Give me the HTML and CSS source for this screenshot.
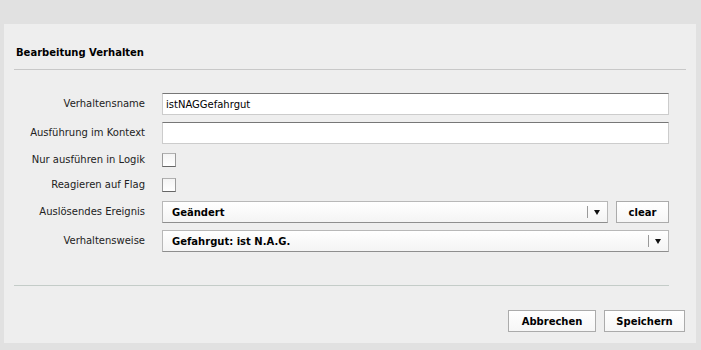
FILE: index.html
```html
<!DOCTYPE html>
<html lang="de">
<head>
  <title>Bearbeitung Verhalten</title>
  <meta charset="utf-8">
  <link rel="stylesheet" href="styles.css">
</head>
<body>
  <div class="panel">
    <h2 class="panel-title">Bearbeitung Verhalten</h2>
    <form class="form">
      <label class="form-label" for="name">Verhaltensname</label>
      <input class="text-input" type="text" id="name" value="istNAGGefahrgut">

      <label class="form-label" for="context">Ausführung im Kontext</label>
      <input class="text-input" type="text" id="context">

      <label class="form-label" for="logic">Nur ausführen in Logik</label>
      <div class="field"><span class="checkbox" id="logic"></span></div>

      <label class="form-label" for="flag">Reagieren auf Flag</label>
      <div class="field"><span class="checkbox" id="flag"></span></div>

      <label class="form-label">Auslösendes Ereignis</label>
      <div class="field field-inline">
        <div class="select">
          <span class="select-value">Geändert</span>
          <span class="select-arrow"></span>
        </div>
        <button type="button" class="button button-small">clear</button>
      </div>

      <label class="form-label">Verhaltensweise</label>
      <div class="select">
        <span class="select-value">Gefahrgut: ist N.A.G.</span>
        <span class="select-arrow"></span>
      </div>
    </form>
    <div class="actions">
      <button type="button" class="button button-cancel">Abbrechen</button>
      <button type="button" class="button button-save">Speichern</button>
    </div>
  </div>
</body>
</html>
```

FILE: styles.css
```css
*, *::before, *::after {
  margin: 0;
  padding: 0;
  box-sizing: border-box;
}

body {
  padding: 24px 5px 6px 4px;
  background-color: #E1E1E1;
  color: #222222;
  font-family: "DejaVu Sans", Verdana, sans-serif;
  font-size: 10px;
}

.panel {
  padding: 22px 10px 11px;
  background-color: #EEEEEE;
}

.panel-title {
  padding: 0 2px 9px;
  border-bottom: 1px solid #C8C8C8;
  color: #000000;
  font-size: 10px;
  font-weight: bold;
  line-height: 14px;
}

.form {
  display: grid;
  grid-template-columns: 131px 1fr;
  grid-template-rows: 22px 22px 18px 18px 22px 22px;
  column-gap: 17px;
  row-gap: 7px;
  margin: 23px 17px 0 0;
  padding-bottom: 33px;
  border-bottom: 1px solid #C4CCC8;
}

.form-label {
  align-self: center;
  text-align: right;
  line-height: 14px;
}

.text-input {
  height: 22px;
  padding: 0 3px;
  border: 1px solid #CCCCCC;
  border-top-color: #777777;
  background-color: #FFFFFF;
  color: #000000;
  font-family: inherit;
  font-size: 10px;
  outline: none;
}

.field {
  display: flex;
  align-items: center;
}

.field-inline {
  gap: 8px;
}

.checkbox {
  width: 14px;
  height: 14px;
  border: 1px solid #9A9A9A;
  border-bottom-color: #666666;
  border-top-color: #B0B0B0;
  background: linear-gradient(#F4F4F4, #FFFFFF);
}

.select {
  flex: 1;
  display: flex;
  align-items: center;
  height: 22px;
  border: 1px solid #B8B8B8;
  border-bottom-color: #8E8E8E;
  background: linear-gradient(#FFFFFF, #F4F4F4);
  color: #000000;
  font-weight: bold;
}

.select-value {
  flex: 1;
  padding-left: 9px;
}

.select-arrow {
  position: relative;
  width: 20px;
  height: 12px;
  border-left: 1px solid #9A9A9A;
}

.select-arrow::after {
  content: "";
  position: absolute;
  top: 4px;
  left: 6px;
  border-top: 5px solid #111111;
  border-left: 3.5px solid transparent;
  border-right: 3.5px solid transparent;
}

.button {
  height: 22px;
  border: 1px solid #ABABAB;
  background: linear-gradient(#FFFFFF, #F6F6F6);
  color: #000000;
  font-family: inherit;
  font-size: 10px;
  font-weight: bold;
}

.button-small {
  width: 53px;
}

.actions {
  display: flex;
  justify-content: flex-end;
  gap: 8px;
  margin: 24px 1px 0 0;
}

.button-cancel {
  width: 88px;
}

.button-save {
  width: 81px;
}
```
